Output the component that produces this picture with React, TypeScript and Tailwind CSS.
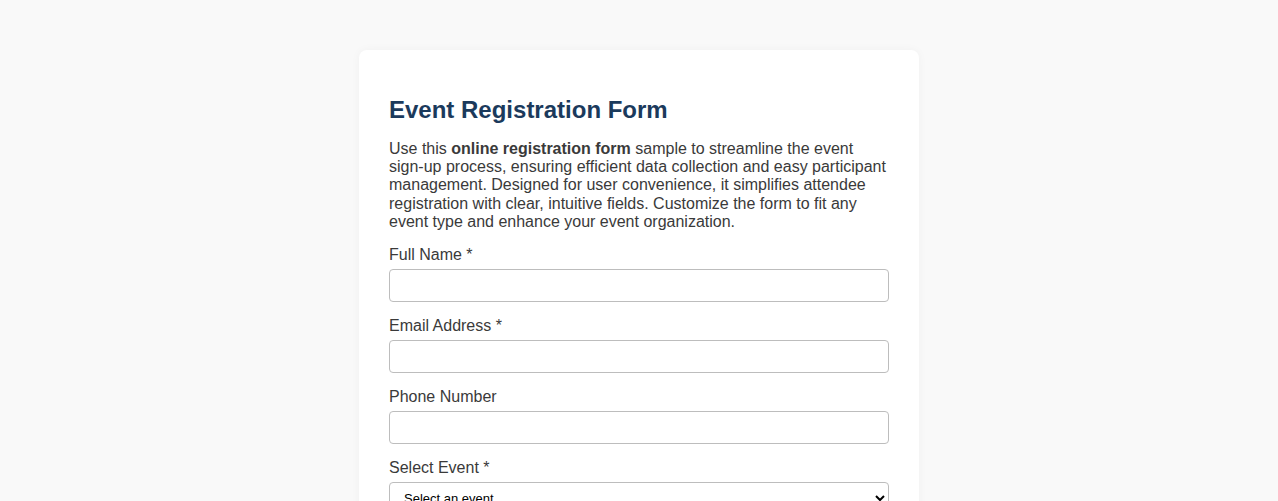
import React from "react";

export default function App() {
  const font = { fontFamily: '"Liberation Sans", Arial, sans-serif' };
  const inputCls =
    "block w-full h-[33px] rounded-[4px] border border-[#bdbdbd] bg-white px-2 text-[16px] outline-none";
  return (
    <div className="min-h-screen bg-[#f9f9f9] pt-[50px]" style={font}>
      <div className="mx-auto w-[560px] rounded-[8px] bg-white px-[30px] pt-[46px] pb-[30px] shadow-[0_0_10px_rgba(0,0,0,0.04)]">
        <h1 className="text-[24px] font-bold leading-[27.6px] text-[#1b3a5c]">Event Registration Form</h1>
        <p className="mt-[16px] text-[16px] leading-[18.4px] text-[#3a3a3a]">
          Use this <strong>online registration form</strong> sample to streamline the event sign-up process, ensuring
          efficient data collection and easy participant management. Designed for user convenience, it simplifies
          attendee registration with clear, intuitive fields. Customize the form to fit any event type and enhance your
          event organization.
        </p>
        <form className="mt-[14px] flex flex-col gap-[14.6px]">
          <div>
            <label className="block text-[16px] leading-[18.4px] text-[#3a3a3a]">Full Name *</label>
            <input type="text" className={"mt-[5px] " + inputCls} />
          </div>
          <div>
            <label className="block text-[16px] leading-[18.4px] text-[#3a3a3a]">Email Address *</label>
            <input type="email" className={"mt-[5px] " + inputCls} />
          </div>
          <div>
            <label className="block text-[16px] leading-[18.4px] text-[#3a3a3a]">Phone Number</label>
            <input type="tel" className={"mt-[5px] " + inputCls} />
          </div>
          <div>
            <label className="block text-[16px] leading-[18.4px] text-[#3a3a3a]">Select Event *</label>
            <select
              defaultValue=""
              className="mt-[5px] block w-full h-[33px] rounded-[4px] border border-[#bdbdbd] bg-white px-[10px] text-[13px] text-black"
            >
              <option value="">Select an event</option>
              <option>Conference</option>
              <option>Workshop</option>
            </select>
          </div>
        </form>
      </div>
    </div>
  );
}
